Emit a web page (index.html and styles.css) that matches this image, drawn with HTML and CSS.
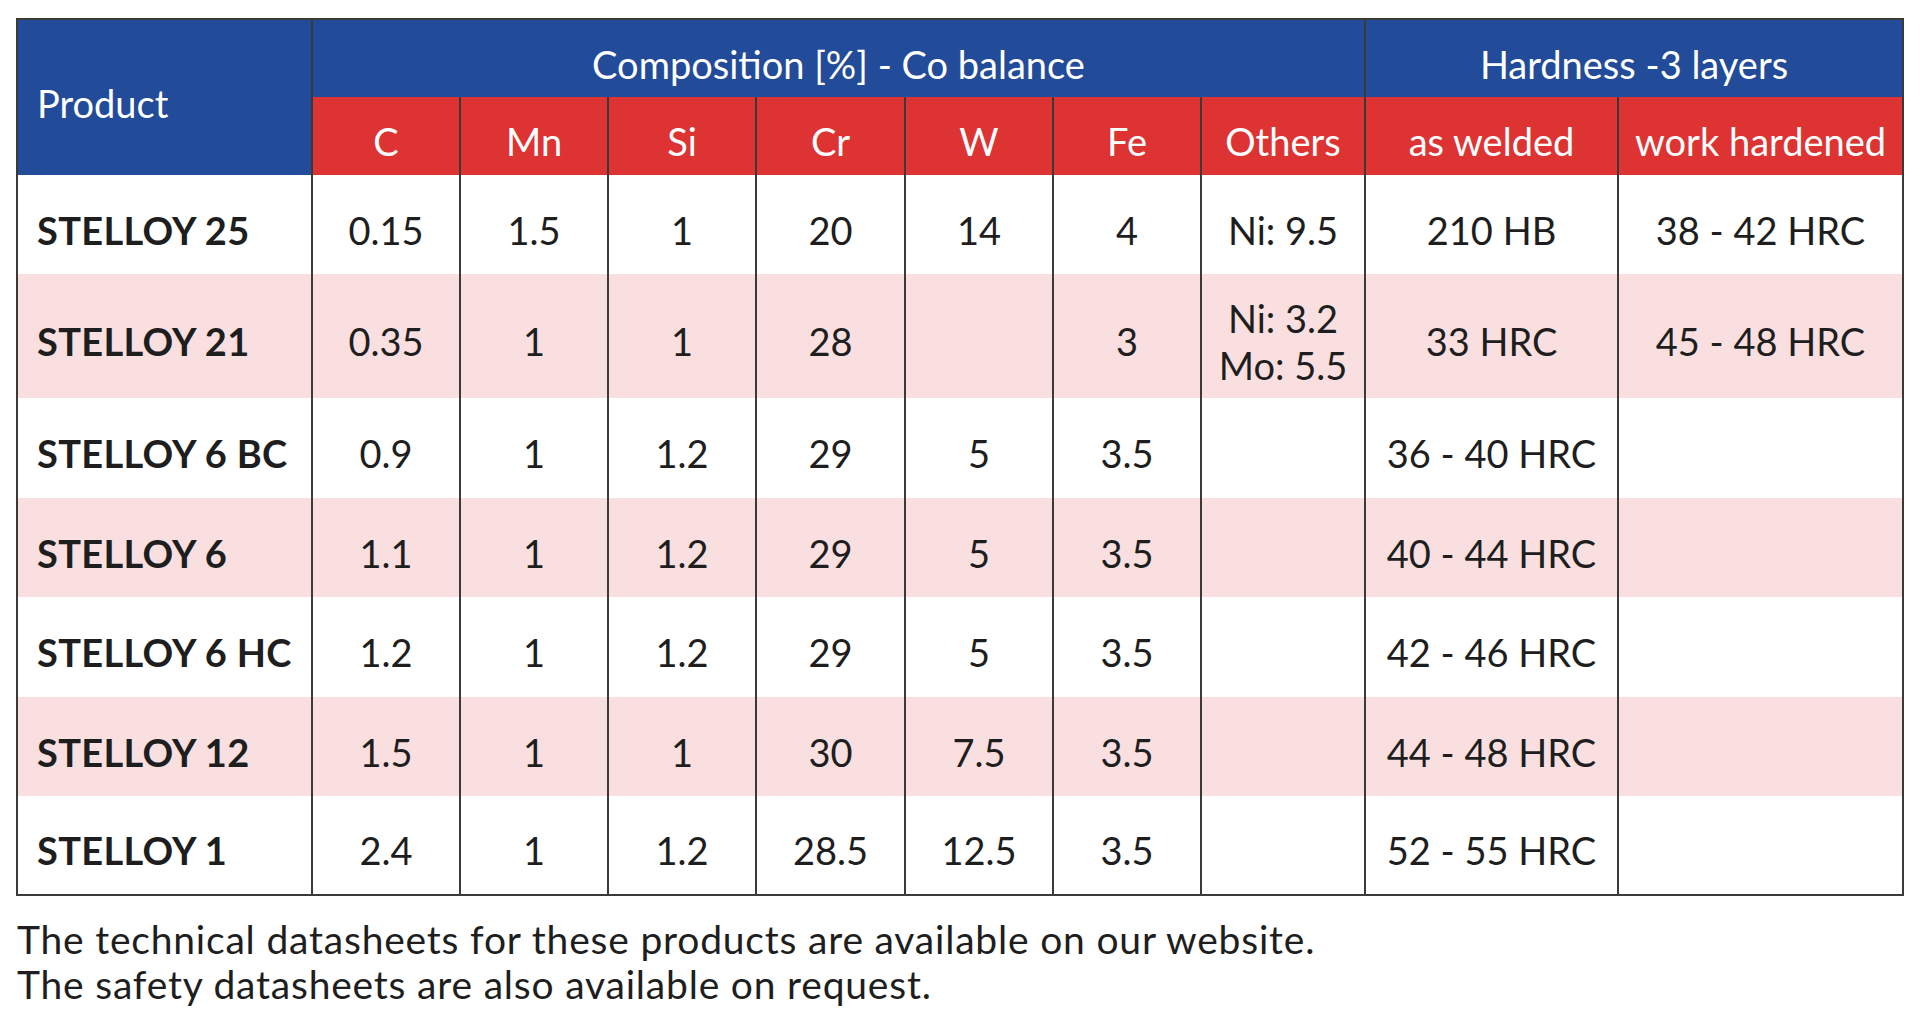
FILE: index.html
```html
<!DOCTYPE html>
<html lang="en">
<head>
<meta charset="utf-8">
<title>Stelloy composition</title>
<link rel="stylesheet" href="styles.css">
</head>
<body>
<div class="page">
  <div class="grid">
    <div class="cell hd-blue hd-product">Product</div>
    <div class="cell hd-blue hd-comp">Composition [%] - Co balance</div>
    <div class="cell hd-blue hd-hard">Hardness -3 layers</div>

    <div class="cell hd-red">C</div>
    <div class="cell hd-red">Mn</div>
    <div class="cell hd-red">Si</div>
    <div class="cell hd-red">Cr</div>
    <div class="cell hd-red">W</div>
    <div class="cell hd-red">Fe</div>
    <div class="cell hd-red">Others</div>
    <div class="cell hd-red">as welded</div>
    <div class="cell hd-red">work hardened</div>

    <div class="cell name">STELLOY 25</div>
    <div class="cell">0.15</div>
    <div class="cell">1.5</div>
    <div class="cell">1</div>
    <div class="cell">20</div>
    <div class="cell">14</div>
    <div class="cell">4</div>
    <div class="cell">Ni: 9.5</div>
    <div class="cell">210 HB</div>
    <div class="cell">38 - 42 HRC</div>

    <div class="cell name alt">STELLOY 21</div>
    <div class="cell alt">0.35</div>
    <div class="cell alt">1</div>
    <div class="cell alt">1</div>
    <div class="cell alt">28</div>
    <div class="cell alt"></div>
    <div class="cell alt">3</div>
    <div class="cell alt multi">Ni: 3.2<br>Mo: 5.5</div>
    <div class="cell alt">33 HRC</div>
    <div class="cell alt">45 - 48 HRC</div>

    <div class="cell name">STELLOY 6 BC</div>
    <div class="cell">0.9</div>
    <div class="cell">1</div>
    <div class="cell">1.2</div>
    <div class="cell">29</div>
    <div class="cell">5</div>
    <div class="cell">3.5</div>
    <div class="cell"></div>
    <div class="cell">36 - 40 HRC</div>
    <div class="cell"></div>

    <div class="cell name alt">STELLOY 6</div>
    <div class="cell alt">1.1</div>
    <div class="cell alt">1</div>
    <div class="cell alt">1.2</div>
    <div class="cell alt">29</div>
    <div class="cell alt">5</div>
    <div class="cell alt">3.5</div>
    <div class="cell alt"></div>
    <div class="cell alt">40 - 44 HRC</div>
    <div class="cell alt"></div>

    <div class="cell name">STELLOY 6 HC</div>
    <div class="cell">1.2</div>
    <div class="cell">1</div>
    <div class="cell">1.2</div>
    <div class="cell">29</div>
    <div class="cell">5</div>
    <div class="cell">3.5</div>
    <div class="cell"></div>
    <div class="cell">42 - 46 HRC</div>
    <div class="cell"></div>

    <div class="cell name alt">STELLOY 12</div>
    <div class="cell alt">1.5</div>
    <div class="cell alt">1</div>
    <div class="cell alt">1</div>
    <div class="cell alt">30</div>
    <div class="cell alt">7.5</div>
    <div class="cell alt">3.5</div>
    <div class="cell alt"></div>
    <div class="cell alt">44 - 48 HRC</div>
    <div class="cell alt"></div>

    <div class="cell name">STELLOY 1</div>
    <div class="cell">2.4</div>
    <div class="cell">1</div>
    <div class="cell">1.2</div>
    <div class="cell">28.5</div>
    <div class="cell">12.5</div>
    <div class="cell">3.5</div>
    <div class="cell"></div>
    <div class="cell">52 - 55 HRC</div>
    <div class="cell"></div>
  </div>
  <p class="note">The technical datasheets for these products are available on our website.<br>The safety datasheets are also available on request.</p>
</div>
</body>
</html>
```
FILE: styles.css
```css
html, body {
  margin: 0;
  padding: 0;
  background: #ffffff;
}

body {
  font-family: Lato, "Liberation Sans", sans-serif;
  color: #1e1e1e;
}

.page {
  padding: 18px 0 0 16px;
}

.grid {
  display: grid;
  width: 1884px;
  grid-template-columns: 293px 148px 148px 148px 149px 148px 148px 164px 253px 285px;
  grid-template-rows: 77px 78px 99px 124px 100px 99px 100px 99px 98px;
  border: 2px solid #3a3a3a;
}

.cell {
  box-sizing: border-box;
  display: flex;
  align-items: center;
  justify-content: center;
  padding-top: 12px;
  border-left: 2px solid #3a3a3a;
  font-size: 38px;
  line-height: 1.2;
  text-align: center;
  background: #ffffff;
}

.cell.name {
  border-left: none;
  justify-content: flex-start;
  padding-left: 19px;
  font-weight: 700;
  letter-spacing: 0.3px;
}

.cell.alt {
  background: #fadfe1;
}

.cell.multi {
  line-height: 47px;
}

.hd-blue {
  background: #224b99;
  color: #ffffff;
}

.hd-red {
  background: #dd3333;
  color: #ffffff;
}

.hd-product {
  grid-row: 1 / span 2;
  border-left: none;
  justify-content: flex-start;
  padding-left: 19px;
}

.hd-comp {
  grid-column: 2 / span 7;
}

.hd-hard {
  grid-column: 9 / span 2;
}

.note {
  margin: 21px 0 0 1px;
  font-size: 39px;
  line-height: 45px;
  letter-spacing: 0.8px;
  color: #1e1e1e;
}
```
